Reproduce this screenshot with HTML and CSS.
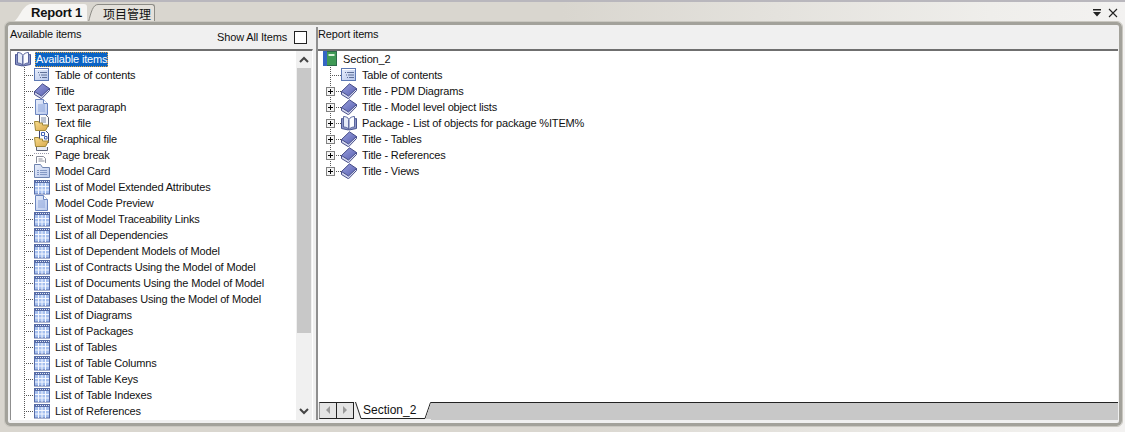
FILE: index.html
```html
<!DOCTYPE html>
<html>
<head>
<meta charset="utf-8">
<title>Report 1</title>
<link rel="stylesheet" href="styles.css">
</head>
<body>
<svg class="defs" width="0" height="0">
  <defs>
    <linearGradient id="g-folder" x1="0" y1="0" x2="1" y2="1"><stop offset="0" stop-color="#f8dc8c"/><stop offset="1" stop-color="#d8a84c"/></linearGradient>
    <linearGradient id="g-blue" x1="0" y1="0" x2="1" y2="1"><stop offset="0" stop-color="#e8eefb"/><stop offset="1" stop-color="#b8c8ec"/></linearGradient>
    <linearGradient id="g-title" x1="0" y1="0" x2="1" y2="1"><stop offset="0" stop-color="#9ba1de"/><stop offset="1" stop-color="#5860b0"/></linearGradient>
  </defs>
  <symbol id="i-book" viewBox="0 0 16 16">
    <path d="M.5 3.500v10l7 1.500V5z" fill="#8c96c8" stroke="#4a5590"/>
    <path d="M2.500 1.500c2.500 0 4.500 1 5.500 3v10c-1-1.500-3-2.500-5.500-2.500z" fill="#e6ebf8" stroke="#5a669e"/>
    <path d="M15.500 3.500v10l-7.500 1.500V5z" fill="#8c96c8" stroke="#4a5590"/>
    <path d="M13.500 1.500c-2.500 0-4.500 1-5.500 3v10c1-1.500 3-2.500 5.500-2.500z" fill="#fbfcff" stroke="#5a669e"/>
  </symbol>
  <symbol id="i-toc" viewBox="0 0 16 16">
    <rect x=".5" y="1.500" width="14" height="12" fill="url(#g-blue)" stroke="#5d79b4"/>
    <path d="M1 2h13v1H1z" fill="#fff"/>
    <path d="M4 5.500h1M6 5.500h7M5 8h1M7 8h6M6 10.500h1M8 10.500h5" stroke="#5f7098"/>
  </symbol>
  <symbol id="i-title" viewBox="0 0 16 16">
    <path d="M.5 8.500v3L7.500 15.800 15.500 7.500V5.500z" fill="#d5d9f0" stroke="#464d88"/>
    <path d="M8.500 .8 15.500 5.500 7.500 13 .5 8.500z" fill="url(#g-title)" stroke="#464d88"/>
  </symbol>
  <symbol id="i-doc" viewBox="0 0 16 16">
    <path d="M1.500.5h8l4 4v11h-12z" fill="url(#g-blue)" stroke="#6c86c0"/>
    <path d="M9.500.5v4h4" fill="#fff" stroke="#6c86c0"/>
    <path d="M4 6h7M4 8h7M4 10h7M4 12h7" stroke="#8ea6dc"/>
  </symbol>
  <symbol id="i-file" viewBox="0 0 16 16">
    <path d="M5.500-.5h6l3 3v9h-9z" fill="#fbfbfb" stroke="#5c5f70"/>
    <path d="M7 3h5M7 5h5M7 7h5" stroke="#7d8aa8"/>
    <path d="M.5 6.500h4l1 1.500h3v2h6l-3 5.500H1.500z" fill="url(#g-folder)" stroke="#a08838"/>
  </symbol>
  <symbol id="i-graph" viewBox="0 0 16 16">
    <path d="M5.500-.5h6l3 3v9h-9z" fill="#fbfbfb" stroke="#3c4270"/>
    <path d="M7.500 1.500h3v3h-3zM10.500 5.500h2.500v2.500h-2.500z" fill="#fff" stroke="#3f5fb4"/>
    <path d="M.5 6.500h4l1 1.500h3v2h6l-3 5.500H1.500z" fill="url(#g-folder)" stroke="#a08838"/>
  </symbol>
  <symbol id="i-break" viewBox="0 0 16 16">
    <path d="M2.500-2h11v5.500h-11z" fill="#e6e9f2" stroke="#5d6478"/>
    <path d="M0 6.500h16" stroke="#99a" stroke-dasharray="1 1"/>
    <path d="M2.500 16V9.500h7l2 2V16" fill="#fff" stroke="#8a8e9c"/>
    <path d="M4.500 12h4M4.500 14h6" stroke="#8a8e9c"/>
  </symbol>
  <symbol id="i-card" viewBox="0 0 16 16">
    <path d="M.5 1.500h6l2 3h7v10H.5z" fill="url(#g-blue)" stroke="#6f84b0"/>
    <path d="M3 7.500h2M6 7.500h7M3 9.500h2M6 9.500h7M3 11.500h2M6 11.500h7" stroke="#8498c4"/>
  </symbol>
  <symbol id="i-grid" viewBox="0 0 16 16">
    <rect x=".5" y="1.500" width="15" height="13.500" fill="#a6c0ef" stroke="#566ba6"/>
    <path d="M1 2h14v2H1z" fill="#566ba6"/>
    <path d="M2 2.500h1M4 2.500h1M6 2.500h1M8 2.500h1M10 2.500h1M12 2.500h1M14 2.500h1" stroke="#dfe6f6"/>
    <path d="M4.500 4v11M8 4v11M11.500 4v11M1 7.500h14M1 11h14" stroke="#f4f7ff"/>
  </symbol>
  <symbol id="i-section" viewBox="0 0 16 16">
    <rect x=".5" y=".5" width="13" height="14" fill="#3f9a55" stroke="#2e6b4a"/>
    <path d="M0 0h4v15H0z" fill="#3566c4"/>
    <path d="M5.500 3h6v2h-6z" fill="#d8f2d8"/>
  </symbol>
</svg>

<div class="app">
  <header class="tabstrip">
    <div class="doc-tabs">
      <svg class="tab-curve" viewBox="0 0 18 18"><path d="M0 18C6 16 9 1 18 0v18z" fill="#f6f5f3"/></svg>
      <span class="doc-tab active">Report 1</span>
      <svg class="tab-curve small" viewBox="0 0 10 18"><path d="M.5 18C3 8 5 .5 10 .5V18z" fill="#e4e1db"/><path d="M.5 18C3 8 5 .5 10 .5" fill="none" stroke="#8c8b85"/></svg>
      <span class="doc-tab">项目管理</span>
    </div>
    <div class="win-btns">
      <svg class="win-btn" viewBox="0 0 10 10"><path d="M1 1h8v1.500H1zM1 4h8L5 8.500z" fill="#222"/></svg>
      <svg class="win-btn" viewBox="0 0 10 10"><path d="M1 1l8 8M9 1 1 9" stroke="#222" stroke-width="1.100" fill="none"/></svg>
    </div>
  </header>

  <main class="frame">
    <section class="pane pane-left">
      <div class="pane-head">
        <span class="pane-title">Available items</span>
        <label class="show-all">Show All Items<span class="checkbox"></span></label>
      </div>
      <div class="tree-box">
        <ul class="tree tree-avail">
          <li class="row root"><svg class="ico"><use href="#i-book"/></svg><span class="lbl selected">Available items</span></li>
          <li class="row"><i class="branch"></i><svg class="ico"><use href="#i-toc"/></svg><span class="lbl">Table of contents</span></li>
          <li class="row"><i class="branch"></i><svg class="ico"><use href="#i-title"/></svg><span class="lbl">Title</span></li>
          <li class="row"><i class="branch"></i><svg class="ico"><use href="#i-doc"/></svg><span class="lbl">Text paragraph</span></li>
          <li class="row"><i class="branch"></i><svg class="ico"><use href="#i-file"/></svg><span class="lbl">Text file</span></li>
          <li class="row"><i class="branch"></i><svg class="ico"><use href="#i-graph"/></svg><span class="lbl">Graphical file</span></li>
          <li class="row"><i class="branch"></i><svg class="ico"><use href="#i-break"/></svg><span class="lbl">Page break</span></li>
          <li class="row"><i class="branch"></i><svg class="ico"><use href="#i-card"/></svg><span class="lbl">Model Card</span></li>
          <li class="row"><i class="branch"></i><svg class="ico"><use href="#i-grid"/></svg><span class="lbl">List of Model Extended Attributes</span></li>
          <li class="row"><i class="branch"></i><svg class="ico"><use href="#i-doc"/></svg><span class="lbl">Model Code Preview</span></li>
          <li class="row"><i class="branch"></i><svg class="ico"><use href="#i-grid"/></svg><span class="lbl">List of Model Traceability Links</span></li>
          <li class="row"><i class="branch"></i><svg class="ico"><use href="#i-grid"/></svg><span class="lbl">List of all Dependencies</span></li>
          <li class="row"><i class="branch"></i><svg class="ico"><use href="#i-grid"/></svg><span class="lbl">List of Dependent Models of Model</span></li>
          <li class="row"><i class="branch"></i><svg class="ico"><use href="#i-grid"/></svg><span class="lbl">List of Contracts Using the Model of Model</span></li>
          <li class="row"><i class="branch"></i><svg class="ico"><use href="#i-grid"/></svg><span class="lbl">List of Documents Using the Model of Model</span></li>
          <li class="row"><i class="branch"></i><svg class="ico"><use href="#i-grid"/></svg><span class="lbl">List of Databases Using the Model of Model</span></li>
          <li class="row"><i class="branch"></i><svg class="ico"><use href="#i-grid"/></svg><span class="lbl">List of Diagrams</span></li>
          <li class="row"><i class="branch"></i><svg class="ico"><use href="#i-grid"/></svg><span class="lbl">List of Packages</span></li>
          <li class="row"><i class="branch"></i><svg class="ico"><use href="#i-grid"/></svg><span class="lbl">List of Tables</span></li>
          <li class="row"><i class="branch"></i><svg class="ico"><use href="#i-grid"/></svg><span class="lbl">List of Table Columns</span></li>
          <li class="row"><i class="branch"></i><svg class="ico"><use href="#i-grid"/></svg><span class="lbl">List of Table Keys</span></li>
          <li class="row"><i class="branch"></i><svg class="ico"><use href="#i-grid"/></svg><span class="lbl">List of Table Indexes</span></li>
          <li class="row"><i class="branch"></i><svg class="ico"><use href="#i-grid"/></svg><span class="lbl">List of References</span></li>
        </ul>
        <div class="scrollbar">
          <svg class="sb-arrow" viewBox="0 0 16 17"><path d="M4 11 8 7l4 4" fill="none" stroke="#444" stroke-width="2"/></svg>
          <div class="sb-thumb"></div>
          <div class="sb-track"></div>
          <svg class="sb-arrow" viewBox="0 0 16 17"><path d="M4 6l4 4 4-4" fill="none" stroke="#444" stroke-width="2"/></svg>
        </div>
      </div>
    </section>

    <section class="pane pane-right">
      <div class="pane-head">
        <span class="pane-title">Report items</span>
      </div>
      <div class="report-box">
        <ul class="tree tree-report">
          <li class="row root"><svg class="ico"><use href="#i-section"/></svg><span class="lbl">Section_2</span></li>
          <li class="row"><i class="branch"></i><svg class="ico"><use href="#i-toc"/></svg><span class="lbl">Table of contents</span></li>
          <li class="row"><i class="branch plus"><b class="box"></b></i><svg class="ico"><use href="#i-title"/></svg><span class="lbl">Title - PDM Diagrams</span></li>
          <li class="row"><i class="branch plus"><b class="box"></b></i><svg class="ico"><use href="#i-title"/></svg><span class="lbl">Title - Model level object lists</span></li>
          <li class="row"><i class="branch plus"><b class="box"></b></i><svg class="ico"><use href="#i-book"/></svg><span class="lbl">Package - List of objects for package %ITEM%</span></li>
          <li class="row"><i class="branch plus"><b class="box"></b></i><svg class="ico"><use href="#i-title"/></svg><span class="lbl">Title - Tables</span></li>
          <li class="row"><i class="branch plus"><b class="box"></b></i><svg class="ico"><use href="#i-title"/></svg><span class="lbl">Title - References</span></li>
          <li class="row last"><i class="branch plus"><b class="box"></b></i><svg class="ico"><use href="#i-title"/></svg><span class="lbl">Title - Views</span></li>
        </ul>
        <div class="sheet-bar">
          <div class="sheet-nav">
            <span class="nav-btn"><svg viewBox="0 0 14 14"><path d="M9 3 5 7l4 4z" fill="#999"/></svg></span>
            <span class="nav-btn"><svg viewBox="0 0 14 14"><path d="M5 3l4 4-4 4z" fill="#999"/></svg></span>
          </div>
          <svg class="sheet-edge left" viewBox="0 0 8 17"><path d="M0 0h8v16.500H6z" fill="#fff"/><path d="M.5 0 6 16.500h2" fill="none" stroke="#222"/></svg>
          <span class="sheet-tab">Section_2</span>
          <svg class="sheet-edge right" viewBox="0 0 8 17"><path d="M0 0h8L2 16.500H0z" fill="#fff"/><path d="M8 .5H7.500L2 16.500H0" fill="none" stroke="#222"/><path d="M8 1 2.500 17H8z" fill="#c8c8c8"/></svg>
          <div class="sheet-rest"></div>
        </div>
      </div>
    </section>
  </main>
</div>
</body>
</html>
```
FILE: styles.css
```css
* { box-sizing: border-box; }
html, body { margin: 0; padding: 0; }
body {
  width: 1125px;
  height: 432px;
  overflow: hidden;
  background: linear-gradient(90deg, #d9d6cf 0, #d9d6cf 50%, #efeeeb 88%, #f3f2f1 100%);
  font-family: "Liberation Sans", Arial, sans-serif;
  font-size: 11px;
  letter-spacing: -.16px;
  color: #111;
}
.defs { display: block; width: 0; height: 0; }
.app { display: flex; flex-direction: column; height: 432px; }

.tabstrip {
  height: 22px;
  flex: none;
  display: flex;
  justify-content: space-between;
  border-top: 2px solid #b9b7bd;
}
.doc-tabs { display: flex; padding-left: 13px; align-items: flex-end; }
.tab-curve { width: 18px; height: 18px; flex: none; display: block; }
.tab-curve.small { width: 10px; margin-left: 1px; }
.doc-tab {
  height: 18px;
  width: 57px;
  padding: 0 0 0 5px;
  font-family: "Noto Sans CJK SC", "Noto Sans", sans-serif;
  font-size: 12px;
  letter-spacing: 0;
  line-height: 17px;
  border: 1px solid #8c8b85;
  border-left: 0;
  border-bottom-color: #a8a69f;
  border-radius: 0 3px 0 0;
  background: #e4e1db;
}
.doc-tab.active {
  width: 56px;
  padding: 0;
  font-family: "Liberation Sans", Arial, sans-serif;
  font-weight: bold;
  font-size: 13px;
  letter-spacing: -.2px;
  border: 0;
  border-radius: 0 3px 0 0;
  background: #f6f5f3;
}
.win-btns { display: flex; gap: 6px; padding: 6px 7px 0 0; }
.win-btn { width: 10px; height: 10px; }

.frame {
  height: 404px;
  flex: none;
  display: flex;
  margin: 0 3px 0 5px;
  padding: 2px 1px 3px 2px;
  background: #f0f0f0;
  border: 3px solid #a3a29b;
  border-radius: 5px;
  outline: 1px solid #c9c7c0;
}
.pane { display: flex; flex-direction: column; min-width: 0; }
.pane-left { width: 306px; flex: none; }
.pane-right { flex: 1; border-left: 2px solid #8f8f8f; }

.pane-head {
  height: 22px;
  flex: none;
  display: flex;
  justify-content: space-between;
}
.pane-title { line-height: 14px; }
.show-all { display: flex; align-items: center; gap: 7px; height: 20px; margin: 0 9px 0 0; }
.checkbox { width: 13px; height: 13px; border: 1px solid #222; background: #fff; }

.tree-box, .report-box {
  flex: 1;
  min-height: 0;
  border-top: 2px solid #6f6f6f;
}
.tree-box {
  display: flex;
  margin-right: 3px;
  border-left: 1px solid #8f8f8f;
  border-right: 1px solid #fff;
  background: #fff;
}
.report-box { display: flex; flex-direction: column; background: #f0f0f0; }

.tree { list-style: none; margin: 0; padding: 0; flex: 1; min-width: 0; min-height: 0; overflow: hidden; background: #fff; }
.row { display: flex; align-items: center; height: 16px; white-space: nowrap; }
.ico { width: 16px; height: 16px; flex: none; overflow: visible; }
.lbl { line-height: 14px; height: 15px; padding: 0 1px; }

.tree-avail { padding-left: 4px; }
.tree-avail .lbl { margin-left: 4px; }
.tree-avail .branch { margin-left: 9px; }
.selected {
  background: #0a63c4;
  color: #fff;
  outline: 1px dotted #e8a33a;
  outline-offset: -1px;
}

.branch {
  display: block;
  flex: none;
  width: 10px;
  height: 16px;
  background-image:
    repeating-linear-gradient(180deg, #555 0 1px, transparent 1px 2px),
    repeating-linear-gradient(90deg, #555 0 1px, transparent 1px 2px);
  background-size: 1px 16px, 11px 1px;
  background-position: 0 0, 0 8px;
  background-repeat: no-repeat;
}

.tree-report { padding-left: 5px; }
.tree-report .root .lbl { margin-left: 3px; }
.tree-report .lbl { margin-left: 4px; }
.tree-report .branch { margin-left: 7px; width: 11px; display: flex; align-items: center; }
.tree-report .last .branch { background-size: 1px 8px, 11px 1px; }
.box {
  display: block;
  width: 9px;
  height: 9px;
  margin-left: -4px;
  border: 1px solid #808080;
  background:
    linear-gradient(#000, #000) center / 5px 1px no-repeat,
    linear-gradient(#000, #000) center / 1px 5px no-repeat,
    #f4f4f4;
}

.scrollbar { width: 16px; flex: none; display: flex; flex-direction: column; background: #f0f0f0; }
.sb-arrow { width: 16px; height: 17px; flex: none; }
.sb-thumb { height: 265px; margin: 0 1px; background: #c8c8c8; flex: none; }
.sb-track { flex: 1; }

.sheet-bar {
  height: 18px;
  flex: none;
  display: flex;
  align-items: flex-start;
}
.sheet-nav {
  display: flex;
  flex: none;
  margin-left: 1px;
  margin-right: 1px;
  border: 1px solid #222;
  border-right: 0;
  border-left-color: #999;
}
.nav-btn { width: 17px; height: 15px; background: #e4e4e4; border-right: 1px solid #222; }
.nav-btn svg { display: block; width: 14px; height: 14px; margin: 0 1px; }
.sheet-edge { width: 8px; height: 17px; flex: none; }
.sheet-tab {
  flex: none;
  width: 60px;
  font-size: 12px;
  letter-spacing: 0;
  line-height: 16px;
  height: 17px;
  background: #fff;
  border-bottom: 1px solid #222;
}
.sheet-rest { flex: 1; height: 18px; background: #c8c8c8; border-top: 1px solid #222; }
```
